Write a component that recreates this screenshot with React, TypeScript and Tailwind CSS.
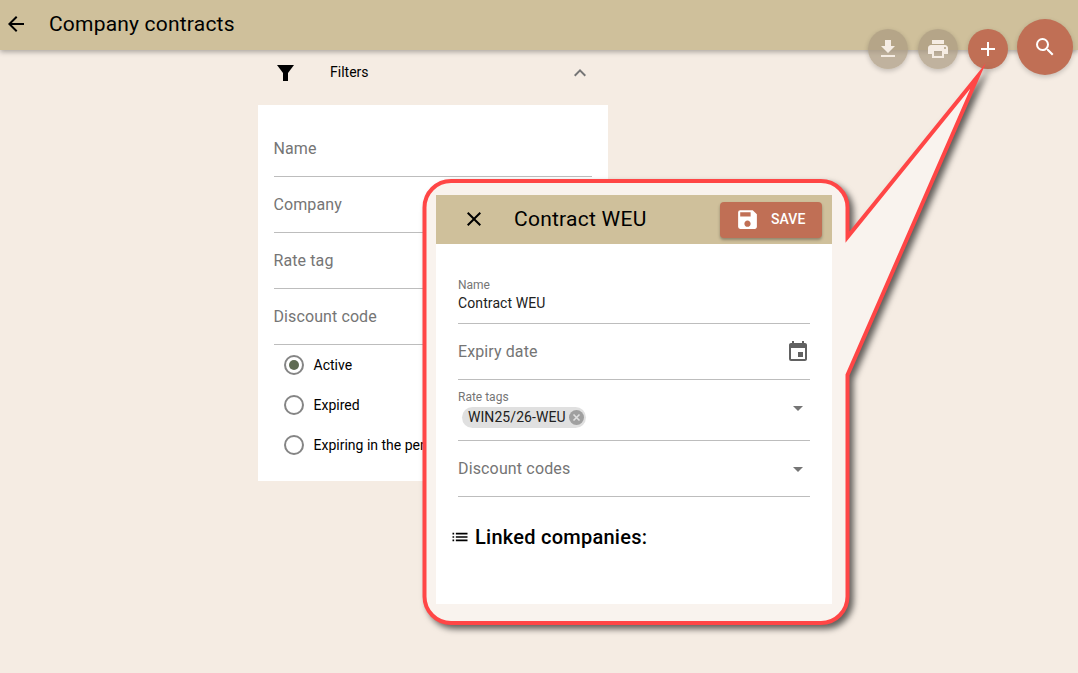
import React from "react";

const font = { fontFamily: "Roboto, 'Liberation Sans', sans-serif" };

function Field({ label, width = "w-[318px]" }: { label: string; width?: string }) {
  return (
    <div className={`h-[56px] ${width} border-b border-[#bdbdbd] flex items-center text-[16px] tracking-[0.1px] text-[#757575]`}>
      <span className="-ml-[0.5px]">{label}</span>
    </div>
  );
}

function Radio({ label, checked }: { label: string; checked?: boolean }) {
  return (
    <div className="h-[40px] flex items-center whitespace-nowrap">
      <span className="w-[20px] h-[20px] rounded-full border-2 border-[#858585] flex items-center justify-center mr-[9.5px]">
        {checked && <span className="w-[10px] h-[10px] rounded-full bg-[#5f6b52]" />}
      </span>
      <span className="text-[14px] text-black">{label}</span>
    </div>
  );
}

function Fab({ size, bg, children, className }: { size: string; bg: string; children: React.ReactNode; className?: string }) {
  return (
    <div className={`${size} ${bg} ${className ?? ""} rounded-full flex items-center justify-center shadow-[0_2px_5px_rgba(0,0,0,0.2)]`}>
      {children}
    </div>
  );
}

export default function App() {
  return (
    <div style={font} className="relative w-[1078px] h-[673px] overflow-hidden bg-[#f5ece3]">
      <header className="h-[50px] bg-[#cfc09b] shadow-[0_2px_5px_rgba(0,0,0,0.3)] flex items-center pl-[4px] pb-[2px]">
        <svg width="24" height="24" viewBox="0 0 24 24" fill="#000"><path d="M20 11H7.83l5.59-5.59L12 4l-8 8 8 8 1.41-1.41L7.83 13H20v-2z" /></svg>
        <span className="ml-[21px] mt-[2px] text-[21px] text-black tracking-[0.2px]">Company contracts</span>
      </header>

      <div className="absolute top-[19px] left-[868px] flex items-start z-10">
        <Fab size="w-[40px] h-[40px] mt-[10px] mr-[10px]" bg="bg-[#a99a80]/70">
          <svg width="24" height="24" viewBox="0 0 24 24" fill="#f5ece3"><path d="M19 9h-4V3H9v6H5l7 7 7-7zM5 18v2h14v-2H5z" /></svg>
        </Fab>
        <Fab size="w-[40px] h-[40px] mt-[10px] mr-[10px]" bg="bg-[#a99a80]/70">
          <svg width="24" height="24" viewBox="0 0 24 24" fill="#f5ece3"><path d="M19 8H5c-1.66 0-3 1.34-3 3v6h4v4h12v-4h4v-6c0-1.66-1.34-3-3-3zm-3 11H8v-5h8v5zm3-7c-.55 0-1-.45-1-1s.45-1 1-1 1 .45 1 1-.45 1-1 1zm-1-9H6v4h12V3z" /></svg>
        </Fab>
        <Fab size="w-[40px] h-[40px] mt-[10px] mr-[9px]" bg="bg-[#c06f55]">
          <svg width="24" height="24" viewBox="0 0 24 24" fill="#fff"><path d="M19 13h-6v6h-2v-6H5v-2h6V5h2v6h6v2z" /></svg>
        </Fab>
        <Fab size="w-[56px] h-[56px]" bg="bg-[#c06f55]">
          <svg width="24" height="24" viewBox="0 0 24 24" fill="#fff"><path d="M15.5 14h-.79l-.28-.27A6.471 6.471 0 0 0 16 9.5 6.5 6.5 0 1 0 9.5 16c1.61 0 3.09-.59 4.23-1.57l.27.28v.79l5 4.99L20.49 19l-4.99-5zm-6 0C7.01 14 5 11.99 5 9.5S7.01 5 9.5 5 14 7.01 14 9.5 11.99 14 9.5 14z" /></svg>
        </Fab>
      </div>

      <main className="ml-[258px] w-[350px]">
        <div className="h-[55px] pb-[10px] flex items-center">
          <svg className="ml-[19px]" width="17" height="16" viewBox="0 0 17 16" fill="#000"><path d="M0 0H17L11 8V16H6V8Z" /></svg>
          <span className="ml-[36px] text-[14px] text-black">Filters</span>
          <svg className="ml-auto mr-[16px]" width="24" height="24" viewBox="0 0 24 24" fill="#757575"><path d="M7.41 15.41 12 10.83l4.59 4.58L18 14l-6-6-6 6z" /></svg>
        </div>
        <section className="h-[376px] bg-white pl-[16px] pt-[16px]">
          <Field label="Name" />
          <Field label="Company" />
          <Field label="Rate tag" />
          <Field label="Discount code" />
          <div className="pl-[10px]">
            <Radio label="Active" checked />
            <Radio label="Expired" />
            <Radio label="Expiring in the period" />
          </div>
        </section>
      </main>

      <svg className="absolute inset-0 z-20 drop-shadow-[4px_4px_3px_rgba(0,0,0,0.6)]" width="1078" height="673" viewBox="0 0 1078 673">
        <path
          d="M451 181 H821 A26.5 26.5 0 0 1 847.5 207.5 V237 L978 76 L847.5 375 V596.5 A26.5 26.5 0 0 1 821 623 H451 A26.5 26.5 0 0 1 424.5 596.5 V207.5 A26.5 26.5 0 0 1 451 181 Z"
          fill="#f9f3ee"
          stroke="#ff4646"
          strokeWidth="4"
          strokeLinejoin="miter"
          strokeMiterlimit="20"
        />
      </svg>

      <aside className="absolute z-30 left-[436px] top-[195px] w-[396px] h-[409px] bg-white">
        <div className="h-[49px] bg-[#cfc09b] flex items-center">
          <svg className="ml-[26px] -mt-[2px]" width="24" height="24" viewBox="0 0 24 24" fill="#000"><path d="M19 6.41 17.59 5 12 10.59 6.41 5 5 6.41 10.59 12 5 17.59 6.41 19 12 13.41 17.59 19 19 17.59 13.41 12z" /></svg>
          <span className="ml-[28px] text-[21px] tracking-[0.25px] text-black">Contract WEU</span>
          <button className="ml-auto mr-[10px] w-[102px] h-[36px] rounded-[4px] bg-[#c06f55] shadow-[0_2px_3px_rgba(0,0,0,0.3)] flex items-center pl-[15px] text-white text-[14px] font-medium">
            <svg width="25" height="25" viewBox="0 0 24 24" fill="#fff"><path d="M17 3H5a2 2 0 0 0-2 2v14a2 2 0 0 0 2 2h14c1.1 0 2-.9 2-2V7l-4-4zm-5 16c-1.66 0-3-1.34-3-3s1.34-3 3-3 3 1.34 3 3-1.34 3-3 3zm3-10H5V5h10v4z" /></svg>
            <span className="ml-[11px] tracking-[0.05px]">SAVE</span>
          </button>
        </div>

        <div className="pl-[22px] w-[374px]">
          <div className="h-[80px] border-b border-[#bdbdbd] pt-[34px] flex flex-col">
            <span className="text-[12px] leading-[14px] text-[#757575]">Name</span>
            <span className="text-[14px] leading-[22px] tracking-[0.1px] text-[#212121]">Contract WEU</span>
          </div>
          <div className="h-[56px] border-b border-[#bdbdbd] flex items-center text-[16px] tracking-[0.1px] text-[#757575]">
            <span>Expiry date</span>
            <svg className="ml-auto" width="24" height="24" viewBox="0 0 24 24" fill="#616161"><path d="M17 12h-5v5h5v-5zM16 1v2H8V1H6v2H5c-1.11 0-1.99.9-1.99 2L3 19a2 2 0 0 0 2 2h14c1.1 0 2-.9 2-2V5c0-1.1-.9-2-2-2h-1V1h-2zm3 18H5V8h14v11z" /></svg>
          </div>
          <div className="relative h-[61px] border-b border-[#bdbdbd] pt-[10px]">
            <div className="text-[12px] leading-[14px] text-[#757575]">Rate tags</div>
            <div className="mt-[3px] ml-[4px] w-fit h-[21px] rounded-full bg-[#e0e0e0] flex items-center pl-[6px] pr-[2px] text-[14px] tracking-[0.07px] text-[#212121]">
              <span>WIN25/26-WEU</span>
              <span className="ml-[3px] w-[15px] h-[15px] rounded-full bg-[#a0a0a0] flex items-center justify-center">
                <svg width="9" height="9" viewBox="0 0 9 9" stroke="#e0e0e0" strokeWidth="1.6"><path d="M1.5 1.5l6 6M7.5 1.5l-6 6" /></svg>
              </span>
            </div>
            <svg className="absolute right-[0px] top-[16px]" width="24" height="24" viewBox="0 0 24 24" fill="#757575"><path d="M7 10l5 5 5-5z" /></svg>
          </div>
          <div className="h-[56px] border-b border-[#bdbdbd] flex items-center justify-between text-[16px] tracking-[0.15px] text-[#757575]">
            <span>Discount codes</span>
            <svg width="24" height="24" viewBox="0 0 24 24" fill="#757575"><path d="M7 10l5 5 5-5z" /></svg>
          </div>
          <div className="mt-[28px] -ml-[8px] flex items-center h-[24px]">
            <svg width="20" height="20" viewBox="0 0 24 24" fill="#000"><path d="M3 13h2v-2H3v2zm0 4h2v-2H3v2zm0-8h2V7H3v2zm4 4h14v-2H7v2zm0 4h14v-2H7v2zM7 7v2h14V7H7z" /></svg>
            <span className="ml-[5px] text-[20px] tracking-[0.25px] font-medium text-black">Linked companies:</span>
          </div>
        </div>
      </aside>
    </div>
  );
}
